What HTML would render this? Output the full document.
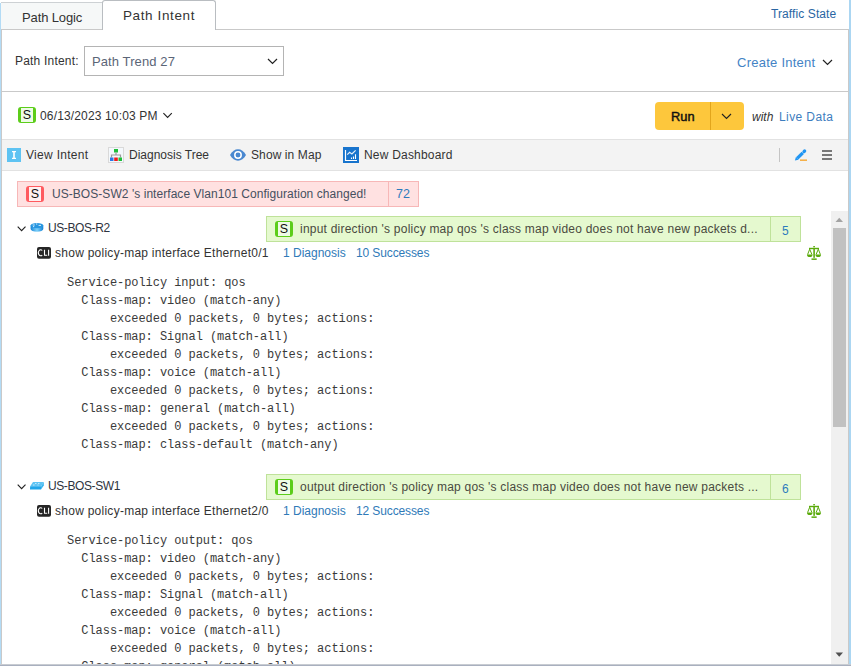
<!DOCTYPE html>
<html><head><meta charset="utf-8">
<style>
*{box-sizing:border-box;margin:0;padding:0}
html,body{width:851px;height:666px;overflow:hidden;background:#fff}
body{position:relative;font-family:"Liberation Sans",sans-serif;color:#333;font-size:13px}
.a{position:absolute}
.t{position:absolute;white-space:pre;line-height:1}
svg{position:absolute;overflow:visible}
.sb{position:absolute;width:18px;height:16px;border-style:solid;border-width:1.5px 3px;border-radius:3px;font-size:12.5px;line-height:14.5px;text-align:center;color:#111;font-family:"Liberation Sans",sans-serif}
.g{border-color:#5ccd1a;background:#eefbe6}
.r{border-color:#ff5a5f;background:#fff0f0}
.code{position:absolute;font-family:"Liberation Mono",monospace;font-size:12px;line-height:18px;white-space:pre;color:#3a3a3a;letter-spacing:-0.055px}
</style></head><body>
<!-- outer borders -->
<div class="a" style="left:0;top:3px;width:1px;height:663px;background:#b3dbf5"></div>
<div class="a" style="left:1px;top:2px;width:1px;height:662px;background:#c9c9c9"></div>
<div class="a" style="left:849px;top:0;width:2px;height:666px;background:#abd6f2"></div>
<div class="a" style="left:848px;top:29px;width:1px;height:635px;background:#c9c9c9"></div>
<div class="a" style="left:0;top:664px;width:851px;height:1px;background:#c8ccd2"></div>
<div class="a" style="left:0;top:665px;width:851px;height:1px;background:#a9b0bf"></div>

<!-- tabs -->
<div class="a" style="left:1px;top:29px;width:848px;height:1px;background:#c9c9c9"></div>
<div class="a" style="left:1px;top:2px;width:102px;height:27px;background:#f6f8f8;border-top:1px solid #cdd1d4;border-right:1px solid #cdd1d4"></div>
<div class="t" style="left:22px;top:11px;font-size:13px;letter-spacing:-0.12px;color:#333">Path Logic</div>
<div class="a" style="left:102px;top:0;width:114px;height:30px;background:#fff;border:1px solid #b9bdc1;border-bottom:none;border-radius:3px 3px 0 0"></div>
<div class="t" style="left:123px;top:9px;font-size:13.5px;letter-spacing:0.62px;color:#333">Path Intent</div>
<div class="t" style="left:771px;top:8px;font-size:12px;letter-spacing:0.1px;color:#2a66a3">Traffic State</div>

<!-- row 2 -->
<div class="t" style="left:15px;top:55px;font-size:12px;letter-spacing:0.2px;color:#333">Path Intent:</div>
<div class="a" style="left:84px;top:46px;width:200px;height:30px;border:1px solid #b4b4b4;background:#fff"></div>
<div class="t" style="left:92px;top:55px;font-size:13px;letter-spacing:0.1px;color:#5b6577">Path Trend 27</div>
<svg style="left:267px;top:58px" width="11" height="7"><path d="M1 1 L5.5 5.5 L10 1" fill="none" stroke="#222" stroke-width="1.2"/></svg>
<div class="t" style="left:737px;top:56px;font-size:13px;letter-spacing:0.25px;color:#4383c5">Create Intent</div>
<svg style="left:822px;top:59px" width="11" height="7"><path d="M1 1 L5.5 5.5 L10 1" fill="none" stroke="#222" stroke-width="1.2"/></svg>
<div class="a" style="left:1px;top:91px;width:848px;height:1px;background:#c9c9c9"></div>

<!-- row 3 -->
<div class="sb g" style="left:18px;top:107px">S</div>
<div class="t" style="left:40px;top:110px;font-size:12px;letter-spacing:0.15px;color:#333">06/13/2023 10:03 PM</div>
<svg style="left:163px;top:112px" width="11" height="7"><path d="M0.4 1.2 L4.6 5.4 L8.8 1.2" fill="none" stroke="#222" stroke-width="1.15"/></svg>
<div class="a" style="left:655px;top:102px;width:89px;height:28px;background:#fdc73c;border-radius:4px"></div>
<div class="a" style="left:710px;top:102px;width:1px;height:28px;background:#e2a51c"></div>
<div class="t" style="left:671px;top:111px;font-size:12.8px;-webkit-text-stroke:0.45px #111;color:#111;letter-spacing:0.1px">Run</div>
<svg style="left:721px;top:113px" width="11" height="7"><path d="M1 1 L5.5 5.5 L10 1" fill="none" stroke="#222" stroke-width="1.15"/></svg>
<div class="t" style="left:752px;top:111px;font-size:12px;font-style:italic;color:#333">with</div>
<div class="t" style="left:779px;top:111px;font-size:12px;letter-spacing:0.4px;color:#3d7dbe">Live Data</div>

<!-- toolbar -->
<div class="a" style="left:2px;top:139px;width:846px;height:32px;background:#f3f3f3;border-top:1px solid #e2e2e2;border-bottom:1px solid #e2e2e2"></div>
<svg style="left:7px;top:148px" width="14" height="14"><rect width="14" height="14" fill="#5ec3f2"/><path d="M5 3h4v1.3h-1.2v5.4h1.2v1.3h-4v-1.3h1.2v-5.4h-1.2z" fill="#fff"/></svg>
<div class="t" style="left:26px;top:149px;font-size:12px;letter-spacing:0.3px;color:#333">View Intent</div>
<svg style="left:108px;top:147px" width="16" height="16"><rect x="0.5" y="0.5" width="15" height="15" fill="#f4f8fc" stroke="#d9d9d9"/><rect x="6" y="2" width="4" height="3.5" fill="#1fbf3a"/><path d="M8 5.5v2.5M3.5 10.5v-2.5h9v2.5" fill="none" stroke="#9a9a9a" stroke-width="1.2"/><rect x="2" y="10.5" width="3.5" height="3.5" fill="#2a78e8"/><rect x="6.2" y="10.5" width="3.6" height="3.5" fill="#f01c1c"/><rect x="10.5" y="10.5" width="3.5" height="3.5" fill="#1fbf3a"/></svg>
<div class="t" style="left:129px;top:149px;font-size:12px;color:#333">Diagnosis Tree</div>
<svg style="left:230px;top:149px" width="17" height="12"><path d="M0 6 C4 -1.6 12 -1.6 16 6 C12 13.6 4 13.6 0 6z" fill="#4a88d0"/><circle cx="8" cy="6" r="3.2" fill="none" stroke="#fff" stroke-width="1.5"/><circle cx="8" cy="6" r="2" fill="#4a88d0"/></svg>
<div class="t" style="left:251px;top:149px;font-size:12px;letter-spacing:0.1px;color:#333">Show in Map</div>
<svg style="left:343px;top:147px" width="16" height="16"><rect width="16" height="16" fill="#1874cd"/><path d="M2.5 3v10.5h11.5" fill="none" stroke="#fff" stroke-width="1.2"/><path d="M4.3 7.6l2.3-2.3 2.3 1.7 3.7-3.7" fill="none" stroke="#fff" stroke-width="1.2" stroke-opacity="0.9"/><path d="M8.5 10.4v1.6M10.5 9.4v2.6M12.5 7.3v4.7" fill="none" stroke="#fff" stroke-width="1.1"/></svg>
<div class="t" style="left:364px;top:149px;font-size:12px;letter-spacing:0.2px;color:#333">New Dashboard</div>
<div class="a" style="left:779px;top:148px;width:1px;height:14px;background:#c4c4c4"></div>
<svg style="left:794px;top:150px" width="14" height="12"><path d="M3.2 8.4 L8.8 2.8" stroke="#2196f3" stroke-width="3.3"/><path d="M0.9 10.6 L1.9 7.1 L4.5 9.7z" fill="#2196f3"/><path d="M10 1.6 L10.6 1" stroke="#2196f3" stroke-width="3.3" stroke-linecap="round"/><rect x="6" y="9.4" width="7" height="1.6" fill="#f5b14a"/></svg>
<svg style="left:822px;top:150px" width="10" height="10"><path d="M0 1h10M0 5h10M0 9h10" stroke="#505050" stroke-width="1.6"/></svg>

<!-- red alert -->
<div class="a" style="left:17px;top:181px;width:402px;height:26px;background:#ffe1e1;border:1px solid #f7b7b7"></div>
<div class="a" style="left:388px;top:181px;width:1px;height:26px;background:#f7b7b7"></div>
<div class="sb r" style="left:26px;top:186px">S</div>
<div class="t" style="left:52px;top:188px;font-size:12px;letter-spacing:0.05px;color:#46505f">US-BOS-SW2 's interface Vlan101 Configuration changed!</div>
<div class="t" style="left:396px;top:188px;font-size:12.5px;color:#2d7bbd">72</div>

<!-- scroll area -->
<div class="a" style="left:2px;top:211px;width:846px;height:453px;overflow:hidden">
  <div class="a" style="left:0;top:0;width:846px;height:453px">
  <!-- all children positioned in page coords via wrapper offset -->
  <div class="a" style="left:-2px;top:-211px;width:851px;height:900px">

  <!-- R2 -->
  <svg style="left:17px;top:226px" width="10" height="6"><path d="M0.7 0.7 L4.6 4.6 L8.5 0.7" fill="none" stroke="#222" stroke-width="1.15"/></svg>
  <svg style="left:30px;top:222px" width="14" height="10"><defs><linearGradient id="rg" x1="0" x2="1"><stop offset="0" stop-color="#1583d6"/><stop offset="0.5" stop-color="#7dd0fa"/><stop offset="1" stop-color="#1583d6"/></linearGradient></defs><path d="M0.6 3.6 V7 A6.35 2.7 0 0 0 13.3 7 V3.6z" fill="url(#rg)"/><ellipse cx="6.95" cy="3.6" rx="6.35" ry="2.7" fill="#2796e0"/><path d="M2.6 3h2.2M3 4.6h1.2M8.6 3.4h2.4M6 2h1.3" stroke="#e8f6ff" stroke-width="0.9"/></svg>
  <div class="t" style="left:48px;top:222px;font-size:12px;letter-spacing:-0.4px;color:#2e3440">US-BOS-R2</div>

  <div class="a" style="left:266px;top:216px;width:535px;height:26px;background:#e5f9cf;border:1px solid #bfe29a"></div>
  <div class="a" style="left:770px;top:216px;width:1px;height:26px;background:#bfe29a"></div>
  <div class="sb g" style="left:275px;top:221px">S</div>
  <div class="t" style="left:300px;top:223px;font-size:12px;letter-spacing:0.22px;color:#4a4a40">input direction 's policy map qos 's class map video does not have new packets d...</div>
  <div class="t" style="left:782px;top:225px;font-size:12px;color:#2d7bbd">5</div>

  <svg style="left:37px;top:247px" width="14" height="12"><rect width="14" height="11.7" rx="2" fill="#262626"/><path d="M5.2 3.5 A2.3 3 0 1 0 5.2 8.1 M7.5 2.8 V8.3 H10.2 M11.6 2.8 V8.8" fill="none" stroke="#fff" stroke-width="1.1"/></svg>
  <div class="t" style="left:55px;top:247px;font-size:12px;letter-spacing:0.26px;color:#333">show policy-map interface Ethernet0/1</div>
  <div class="t" style="left:283px;top:247px;font-size:12px;color:#2f7ab8">1 Diagnosis</div>
  <div class="t" style="left:356px;top:247px;font-size:12px;letter-spacing:-0.12px;color:#2f7ab8">10 Successes</div>
  <svg style="left:807px;top:246px" width="14" height="14"><g fill="#5aaa0a"><rect x="6.3" y="0" width="1.6" height="1.2"/><rect x="2" y="1.8" width="10" height="1.4"/><rect x="6.3" y="1.8" width="1.6" height="10"/><rect x="4.5" y="12.4" width="5.2" height="1.5"/><path d="M0 8.5 h5.5 a2.75 2.6 0 0 1 -5.5 0z"/><path d="M8.5 8.5 h5.5 a2.75 2.6 0 0 1 -5.5 0z"/></g><path d="M2.7 3.2 L0.6 8.5 M2.7 3.2 L4.9 8.5 M11.3 3.2 L9.1 8.5 M11.3 3.2 L13.4 8.5" stroke="#5aaa0a" stroke-width="1"/></svg>

  <div class="code" style="left:67px;top:274px">Service-policy input: qos
  Class-map: video (match-any)
      exceeded 0 packets, 0 bytes; actions:
  Class-map: Signal (match-all)
      exceeded 0 packets, 0 bytes; actions:
  Class-map: voice (match-all)
      exceeded 0 packets, 0 bytes; actions:
  Class-map: general (match-all)
      exceeded 0 packets, 0 bytes; actions:
  Class-map: class-default (match-any)</div>

  <!-- SW1 -->
  <svg style="left:17px;top:484px" width="10" height="6"><path d="M0.7 0.7 L4.6 4.6 L8.5 0.7" fill="none" stroke="#222" stroke-width="1.15"/></svg>
  <svg style="left:30px;top:481px" width="15" height="9"><path d="M3 1 H13.8 L11 5.2 H0.2z" fill="#5ec4f4"/><path d="M0.2 5.2 H11 V8.6 H0z" fill="#1fa6ea"/><path d="M11 5.2 L13.8 1 V4.5 L11 8.6z" fill="#3ab6f0"/><path d="M5 2.5h1.5M8 2.5h1.5M3 4h1.5M7.5 4h1" stroke="#d8f2ff" stroke-width="0.8"/></svg>
  <div class="t" style="left:48px;top:480px;font-size:12px;letter-spacing:-0.4px;color:#2e3440">US-BOS-SW1</div>

  <div class="a" style="left:266px;top:474px;width:535px;height:26px;background:#e5f9cf;border:1px solid #bfe29a"></div>
  <div class="a" style="left:770px;top:474px;width:1px;height:26px;background:#bfe29a"></div>
  <div class="sb g" style="left:275px;top:479px">S</div>
  <div class="t" style="left:300px;top:481px;font-size:12px;letter-spacing:0.22px;color:#4a4a40">output direction 's policy map qos 's class map video does not have new packets ...</div>
  <div class="t" style="left:782px;top:483px;font-size:12px;color:#2d7bbd">6</div>

  <svg style="left:37px;top:505px" width="14" height="12"><rect width="14" height="11.7" rx="2" fill="#262626"/><path d="M5.2 3.5 A2.3 3 0 1 0 5.2 8.1 M7.5 2.8 V8.3 H10.2 M11.6 2.8 V8.8" fill="none" stroke="#fff" stroke-width="1.1"/></svg>
  <div class="t" style="left:55px;top:505px;font-size:12px;letter-spacing:0.26px;color:#333">show policy-map interface Ethernet2/0</div>
  <div class="t" style="left:283px;top:505px;font-size:12px;color:#2f7ab8">1 Diagnosis</div>
  <div class="t" style="left:356px;top:505px;font-size:12px;letter-spacing:-0.12px;color:#2f7ab8">12 Successes</div>
  <svg style="left:807px;top:504px" width="14" height="14"><g fill="#5aaa0a"><rect x="6.3" y="0" width="1.6" height="1.2"/><rect x="2" y="1.8" width="10" height="1.4"/><rect x="6.3" y="1.8" width="1.6" height="10"/><rect x="4.5" y="12.4" width="5.2" height="1.5"/><path d="M0 8.5 h5.5 a2.75 2.6 0 0 1 -5.5 0z"/><path d="M8.5 8.5 h5.5 a2.75 2.6 0 0 1 -5.5 0z"/></g><path d="M2.7 3.2 L0.6 8.5 M2.7 3.2 L4.9 8.5 M11.3 3.2 L9.1 8.5 M11.3 3.2 L13.4 8.5" stroke="#5aaa0a" stroke-width="1"/></svg>

  <div class="code" style="left:67px;top:532px">Service-policy output: qos
  Class-map: video (match-any)
      exceeded 0 packets, 0 bytes; actions:
  Class-map: Signal (match-all)
      exceeded 0 packets, 0 bytes; actions:
  Class-map: voice (match-all)
      exceeded 0 packets, 0 bytes; actions:
  Class-map: general (match-all)
      exceeded 0 packets, 0 bytes; actions:</div>

  <!-- scrollbar -->
  <div class="a" style="left:831px;top:211px;width:17px;height:453px;background:#f0f0f0"></div>
  <div class="a" style="left:833px;top:228px;width:13px;height:199px;background:#c1c1c1"></div>
  <svg style="left:835px;top:217px" width="9" height="6"><path d="M0.5 5 L4.25 0.8 L8 5z" fill="#a3a3a3"/></svg>
  <svg style="left:835px;top:652px" width="9" height="6"><path d="M0.5 0.5 L4.25 4.8 L8 0.5z" fill="#505050"/></svg>
  </div>
  </div>
</div>
</body></html>
